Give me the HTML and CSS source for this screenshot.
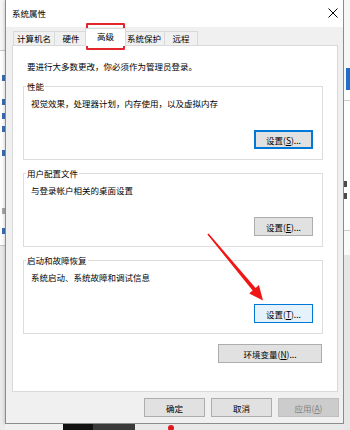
FILE: index.html
```html
<!DOCTYPE html>
<html lang="zh-CN">
<head>
<meta charset="utf-8">
<title>系统属性</title>
<link rel="stylesheet" href="styles.css">
</head>
<body>
<div class="desk">
  <div class="strip-left">
    <div class="sl-top"></div>
    <div class="sl-line"></div>
    <div class="sl-mid">
      <span class="gl gl-blue g1"></span>
      <span class="gl gl-blue g2"></span>
      <span class="gl gl-blue g3"></span>
      <span class="gl gl-blue g4"></span>
      <span class="gl gl-blue g5"></span>
      <span class="gl gl-gray g6"></span>
      <span class="gl gl-blue g7"></span>
    </div>
    <div class="sl-line"></div>
    <div class="sl-bottom"></div>
  </div>

  <div class="win">
    <div class="titlebar">
      <span class="title">系统属性</span>
      <span class="close">
        <svg width="10" height="10" viewBox="0 0 10 10"><path d="M0.5 0.5 L9.5 9.5 M9.5 0.5 L0.5 9.5" stroke="#000" stroke-width="1" fill="none"/></svg>
      </span>
    </div>

    <div class="tabs">
      <div class="tab t1">计算机名</div>
      <div class="tab t2">硬件</div>
      <div class="tab t3 sel">高级</div>
      <div class="tab t4">系统保护</div>
      <div class="tab t5">远程</div>
    </div>

    <div class="panel">
      <div class="intro">要进行大多数更改，你必须作为管理员登录。</div>

      <div class="group">
        <div class="glabel">性能</div>
        <div class="gdesc">视觉效果，处理器计划，内存使用，以及虚拟内存</div>
        <button class="btn set default">设置(<u>S</u>)...</button>
      </div>

      <div class="group">
        <div class="glabel">用户配置文件</div>
        <div class="gdesc">与登录帐户相关的桌面设置</div>
        <button class="btn set">设置(<u>E</u>)...</button>
      </div>

      <div class="group">
        <div class="glabel">启动和故障恢复</div>
        <div class="gdesc">系统启动、系统故障和调试信息</div>
        <button class="btn set hover">设置(<u>T</u>)...</button>
      </div>

      <button class="btn env">环境变量(<u>N</u>)...</button>
    </div>

    <div class="footer">
      <button class="btn fbtn">确定</button>
      <button class="btn fbtn">取消</button>
      <button class="btn fbtn disabled">应用(<u>A</u>)</button>
    </div>
  </div>

  <div class="strip-right">
    <div class="sr-top"></div>
    <div class="sr-blue"></div>
    <div class="sr-gap1"></div>
    <div class="sr-line"></div>
    <div class="sr-mid">
      <span class="gl gl-dark r1"></span>
      <span class="gl gl-dark r2"></span>
    </div>
    <div class="sr-line"></div>
    <div class="sr-gap2"></div>
    <div class="sr-bottom"></div>
  </div>

  <div class="strip-bottom">
    <div class="sb-a"></div>
    <div class="sb-b"></div>
    <div class="sb-c"></div>
    <div class="sb-d"><span class="dot"></span></div>
  </div>

  <div class="mark"></div>
  <svg class="arrow" width="350" height="430" viewBox="0 0 350 430">
    <polygon points="207.4,234.4 252.6,290.6 249.2,293.4 263,300.5 258.9,285.1 255.6,287.9 208.6,233.6" fill="#f01616"/>
  </svg>
</div>
</body>
</html>
```

FILE: styles.css
```css
* {
  box-sizing: border-box;
}

html,
body {
  margin: 0;
  padding: 0;
}

body {
  width: 350px;
  height: 430px;
  overflow: hidden;
  background: #fff;
  font-family: "Noto Sans CJK SC", "Microsoft YaHei", sans-serif;
  font-size: 8.5px;
  line-height: 12px;
  color: #000;
}

.desk {
  position: relative;
  display: grid;
  grid-template-columns: 5px 339px 6px;
  grid-template-rows: 424px 6px;
  width: 350px;
  height: 430px;
}

/* ---------- background strips ---------- */
.strip-left {
  grid-column: 1;
  grid-row: 1 / span 2;
  display: flex;
  flex-direction: column;
}

.sl-top {
  height: 50px;
  background: #f7f7f7;
}

.sl-line {
  height: 1px;
  background: #c9c9c9;
}

.sl-mid {
  height: 194px;
  background: #fff;
  display: flex;
  flex-direction: column;
}

.sl-bottom {
  flex: 1;
  background: #ececec;
}

.gl {
  display: block;
  height: 6px;
  width: 3px;
}

.gl-blue {
  background: #3d6fb0;
}

.gl-gray {
  background: #a9a9a9;
}

.gl-dark {
  background: #4a4a4a;
}

.g1 { margin: 24px 0 0 2px; }
.g2 { margin: 18px 0 0 2px; }
.g3 { margin: 8px 0 0 2px; }
.g4 { margin: 7px 0 0 2px; }
.g5 { margin: 18px 0 0 2px; }
.g6 { margin: 52px 0 0 2px; }
.g7 { margin: 14px 0 0 2px; }

.strip-right {
  grid-column: 3;
  grid-row: 1 / span 2;
  display: flex;
  flex-direction: column;
}

.sr-top {
  height: 68px;
  background: #f7f7f7;
}

.sr-blue {
  height: 22px;
  background: linear-gradient(90deg, #f7f7f7 0 2px, #1e6fc8 2px 100%);
}

.sr-gap1 {
  height: 10px;
  background: #fff;
}

.sr-line {
  height: 1px;
  background: #cfcfcf;
}

.sr-mid {
  height: 129px;
  background: #fff;
  display: flex;
  flex-direction: column;
}

.r1 { margin: 80px 0 0 0; }
.r2 { margin: 6px 0 0 0; }

.sr-gap2 {
  height: 24px;
  background: #fafafa;
}

.sr-bottom {
  flex: 1;
  background: #e6e6e6;
}

.strip-bottom {
  grid-column: 2;
  grid-row: 2;
  display: flex;
}

.sb-a {
  width: 58px;
  background: #f0f0f0;
}

.sb-b {
  width: 30px;
  background: #111;
}

.sb-c {
  width: 42px;
  background: #3a3a3a;
}

.sb-d {
  flex: 1;
  background: #e9e9e9;
  padding-left: 33px;
  padding-top: 1px;
}

.dot {
  display: block;
  width: 6px;
  height: 6px;
  border-radius: 50%;
  background: #e0191e;
}

/* ---------- window ---------- */
.win {
  grid-column: 2;
  grid-row: 1;
  display: flex;
  flex-direction: column;
  background: #f0f0f0;
  border: 1px solid #8c8c8c;
  border-top: none;
  box-shadow: 0 0 4px rgba(0, 0, 0, 0.25);
}

.titlebar {
  flex: none;
  height: 27px;
  background: #fff;
  display: flex;
  align-items: center;
  justify-content: space-between;
  padding: 0 5px 1px 6px;
}

.close {
  display: flex;
}

.close svg {
  display: block;
}

/* ---------- tabs ---------- */
.tabs {
  flex: none;
  height: 18px;
  display: flex;
  align-items: flex-end;
  padding-left: 7px;
}

.tab {
  flex: none;
  height: 14px;
  line-height: 13px;
  text-align: center;
  background: #f0f0f0;
  border: 1px solid #d9d9d9;
  border-bottom: none;
  margin-left: -1px;
}

.t1 { width: 42px; margin-left: 0; }
.t2 { width: 34px; }
.t3 { width: 41px; }
.t4 { width: 42px; }
.t5 { width: 34px; margin-left: -1px; }

.tab.sel {
  position: relative;
  z-index: 2;
  height: 18px;
  line-height: 15px;
  margin: 0 -2px -1px -3px;
  background: #fff;
}

/* ---------- panel ---------- */
.panel {
  flex: none;
  height: 347px;
  margin: 0 5px 0 6px;
  background: #fff;
  border: 1px solid #d9d9d9;
  display: flex;
  flex-direction: column;
  padding: 14px 14px 0 10px;
}

.intro {
  margin-left: 4px;
}

.group {
  flex: none;
  height: 74px;
  margin-top: 13px;
  border: 1px solid #dcdcdc;
  display: flex;
  flex-direction: column;
}

.intro + .group {
  margin-top: 14px;
}

.glabel {
  align-self: flex-start;
  margin: -7px 0 0 2px;
  padding: 0 1px;
  background: #fff;
}

.gdesc {
  margin: 5px 0 0 7px;
}

/* ---------- buttons ---------- */
.btn {
  height: 19px;
  padding: 0;
  border: 1px solid #adadad;
  background: #e1e1e1;
  font-family: inherit;
  font-size: 8.5px;
  line-height: 16px;
  color: #000;
  text-align: center;
}

.btn u {
  text-underline-offset: 1px;
}

.set {
  width: 59px;
  align-self: flex-end;
  margin: auto 9px 10px auto;
}

.default {
  border-color: #0078d7;
  box-shadow: inset 0 0 0 1px #0078d7;
}

.hover {
  border-color: #0078d7;
  background: #e5f1fb;
}

.env {
  width: 104px;
  align-self: flex-end;
  margin: 10px 1px 0 auto;
}

.footer {
  flex: 1;
  display: flex;
  justify-content: flex-end;
  align-items: flex-start;
  gap: 6px;
  padding: 6px 4px 0 0;
}

.fbtn {
  width: 61px;
}

.disabled {
  background: #cccccc;
  border-color: #bfbfbf;
  color: #838383;
}

/* ---------- annotations ---------- */
.mark {
  position: absolute;
  left: 86px;
  top: 23px;
  width: 39px;
  height: 27px;
  border: 2px solid #e3262b;
  border-radius: 1px;
}

.arrow {
  position: absolute;
  left: 0;
  top: 0;
  pointer-events: none;
}
```
